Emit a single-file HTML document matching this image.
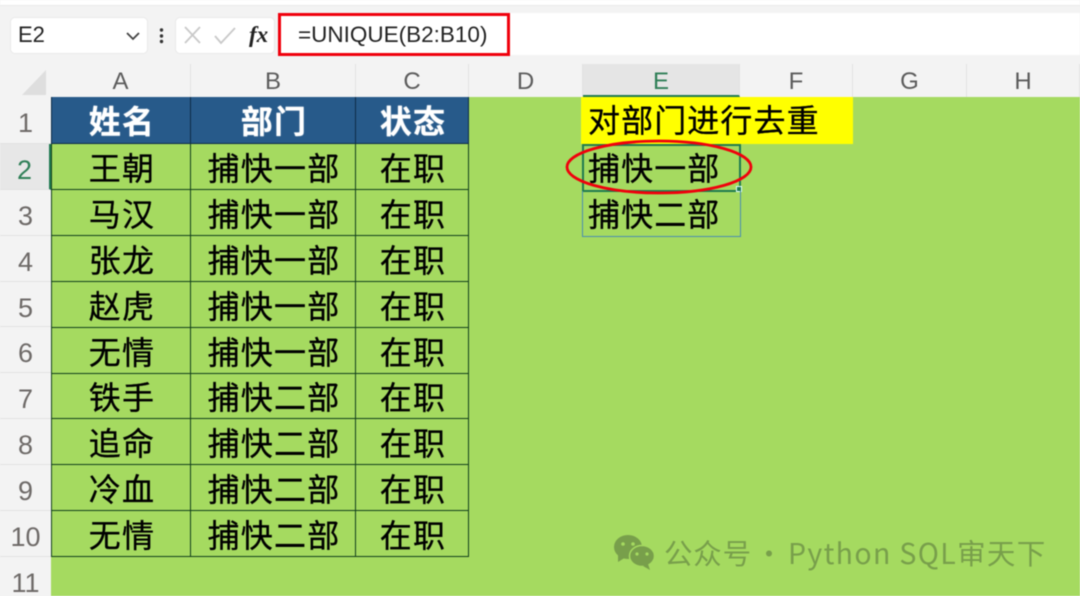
<!DOCTYPE html>
<html lang="zh"><head><meta charset="utf-8"><style>
html,body{margin:0;padding:0;background:#f3f3f3}
#w{position:absolute;left:0;top:0;width:1080px;height:596px;overflow:hidden;background:#f3f3f3;font-family:"Liberation Sans","Noto Sans CJK SC",sans-serif;filter:blur(.45px)}
body{width:1080px;height:596px;overflow:hidden;position:relative}
div{position:absolute;box-sizing:border-box}
.g{background:#a5da60;left:51px;top:97px;width:1029px;height:499px}
.h{top:64px;height:33px;text-align:center;font-size:24px;line-height:36px;color:#5c5c5c;border-right:1px solid #e2e2e2}
.r{left:0;width:51px;text-align:center;font-size:27px;line-height:32px;color:#6e6a68;border-bottom:1px solid #e2e2e2;padding-top:10px}
.c{text-align:center;font-size:32px;color:#000;-webkit-text-stroke:.3px #000;white-space:nowrap;font-family:"Noto Sans CJK SC",sans-serif;line-height:47px;height:46px;border-right:1.5px solid #123f1c;border-bottom:1.5px solid #123f1c;letter-spacing:1.2px;padding-left:2px}
.t{background:#275a8a;color:#fff;-webkit-text-stroke:0;font-weight:700;height:47px;border-color:#0d2c48;letter-spacing:1.2px;text-shadow:0 0 1px #fff}
.p{background:#fff;border-radius:5px;border:1px solid #e9e9e9}
.l{text-align:left;border:0;padding:0;letter-spacing:1.100px}
</style></head><body><div id="w">
<div class="p" style="left:-10px;top:-20px;width:1110px;height:26px;border-radius:8px"></div>

<div class="p" style="left:10px;top:17px;width:138px;height:37px"></div>
<div style="left:18px;top:20px;font-size:22px;line-height:30px;color:#222">E2</div>
<svg style="position:absolute;left:125px;top:30px" width="20" height="12"><path d="M2 3l6 6 6-6" fill="none" stroke="#444" stroke-width="1.8"/></svg>
<svg style="position:absolute;left:158px;top:27px" width="8" height="18"><circle cx="3.500" cy="3" r="1.700" fill="#333"/><circle cx="3.500" cy="9" r="1.700" fill="#333"/><circle cx="3.500" cy="14.500" r="1.700" fill="#333"/></svg>
<div class="p" style="left:175px;top:17px;width:100px;height:37px"></div>
<svg style="position:absolute;left:180px;top:23px" width="60" height="24"><path d="M5 4l15 16M20 4L5 20" stroke="#c9c9c9" stroke-width="1.800" fill="none"/><path d="M35 13l6 7 14-15" stroke="#c9c9c9" stroke-width="1.800" fill="none"/></svg>
<div style="left:249px;top:20px;font:italic 700 23px/30px 'Liberation Serif',serif;color:#222">fx</div>
<div style="left:278px;top:13px;width:802px;height:42px;background:#fff"></div>
<div style="left:278px;top:13px;width:232px;height:43px;border:3px solid #f0000c;background:#fff"></div>
<div style="left:298px;top:20px;font-size:22.500px;line-height:30px;color:#222;white-space:nowrap">=UNIQUE(B2:B10)</div>

<div class="g"></div>
<svg style="position:absolute;left:0;top:64px" width="51" height="33"><path d="M46 6v25H22z" fill="#dedede"/></svg>
<div class="h" style="left:51px;width:140px">A</div>
<div class="h" style="left:191px;width:165px">B</div>
<div class="h" style="left:356px;width:113px">C</div>
<div class="h" style="left:469px;width:114px">D</div>
<div class="h" style="left:583px;width:157px;background:#e5e5e5;color:#2f7f57;border-bottom:2px solid #1f7a50">E</div>
<div class="h" style="left:740px;width:113px">F</div>
<div class="h" style="left:853px;width:114px">G</div>
<div class="h" style="left:967px;width:113px">H</div>

<div class="r" style="top:97px;height:47px">1</div>
<div class="r" style="top:144px;height:46px;background:#e7e7e7;color:#2f7f57;border-right:2px solid #1f7a50">2</div>
<div class="r" style="top:190px;height:46px">3</div>
<div class="r" style="top:236px;height:46px">4</div>
<div class="r" style="top:282px;height:45px">5</div>
<div class="r" style="top:327px;height:46px">6</div>
<div class="r" style="top:373px;height:46px">7</div>
<div class="r" style="top:419px;height:46px">8</div>
<div class="r" style="top:465px;height:46px">9</div>
<div class="r" style="top:511px;height:46px">10</div>
<div class="r" style="top:557px;height:39px;border:0">11</div>

<div class="c t" style="left:51px;top:97px;width:140px;border-left:1px solid #0d2c48">姓名</div><div class="c t" style="left:191px;top:97px;width:165px">部门</div><div class="c t" style="left:356px;top:97px;width:113px">状态</div>

<div class="c" style="left:51px;top:144px;width:140px;border-left:1.500px solid #123f1c">王朝</div><div class="c" style="left:191px;top:144px;width:165px">捕快一部</div><div class="c" style="left:356px;top:144px;width:113px">在职</div>
<div class="c" style="left:51px;top:190px;width:140px;border-left:1.500px solid #123f1c">马汉</div><div class="c" style="left:191px;top:190px;width:165px">捕快一部</div><div class="c" style="left:356px;top:190px;width:113px">在职</div>
<div class="c" style="left:51px;top:236px;width:140px;border-left:1.500px solid #123f1c">张龙</div><div class="c" style="left:191px;top:236px;width:165px">捕快一部</div><div class="c" style="left:356px;top:236px;width:113px">在职</div>
<div class="c" style="left:51px;top:282px;width:140px;border-left:1.500px solid #123f1c">赵虎</div><div class="c" style="left:191px;top:282px;width:165px">捕快一部</div><div class="c" style="left:356px;top:282px;width:113px">在职</div>
<div class="c" style="left:51px;top:328px;width:140px;border-left:1.500px solid #123f1c">无情</div><div class="c" style="left:191px;top:328px;width:165px">捕快一部</div><div class="c" style="left:356px;top:328px;width:113px">在职</div>
<div class="c" style="left:51px;top:373px;width:140px;border-left:1.500px solid #123f1c">铁手</div><div class="c" style="left:191px;top:373px;width:165px">捕快二部</div><div class="c" style="left:356px;top:373px;width:113px">在职</div>
<div class="c" style="left:51px;top:419px;width:140px;border-left:1.500px solid #123f1c">追命</div><div class="c" style="left:191px;top:419px;width:165px">捕快二部</div><div class="c" style="left:356px;top:419px;width:113px">在职</div>
<div class="c" style="left:51px;top:465px;width:140px;border-left:1.500px solid #123f1c">冷血</div><div class="c" style="left:191px;top:465px;width:165px">捕快二部</div><div class="c" style="left:356px;top:465px;width:113px">在职</div>
<div class="c" style="left:51px;top:511px;width:140px;border-left:1.500px solid #123f1c">无情</div><div class="c" style="left:191px;top:511px;width:165px">捕快二部</div><div class="c" style="left:356px;top:511px;width:113px">在职</div>

<div style="left:581px;top:97px;width:272px;height:47px;background:#ff0"></div>
<div class="c l" style="left:588px;top:96px;width:240px">对部门进行去重</div>
<div style="left:582px;top:144px;width:159px;height:48px;border:2px solid #1f7a50"></div>
<div style="left:736px;top:186px;width:6px;height:6px;background:#1f7a50;border:1px solid #dff"></div>
<div style="left:582px;top:191px;width:159px;height:46px;border:1.500px solid #4a8db0;border-top:0"></div>
<div class="c l" style="left:588px;top:144px;width:150px">捕快一部</div>
<div class="c l" style="left:588px;top:190px;width:150px">捕快二部</div>
<svg style="position:absolute;left:560px;top:132px" width="200" height="70"><ellipse cx="99" cy="35" rx="92" ry="26" fill="none" stroke="#f0000c" stroke-width="2.800"/></svg>

<svg style="position:absolute;left:612px;top:533px" width="46" height="38" fill="#789f4b"><ellipse cx="16" cy="14" rx="14" ry="12"/><path d="M6 22l0 7 8-5z"/><ellipse cx="30" cy="23" rx="12.500" ry="10.500" stroke="#a5da60" stroke-width="1.500"/><path d="M36 31l2 6-7-4z"/><circle cx="11" cy="11" r="1.800" fill="#a5da60"/><circle cx="21" cy="11" r="1.800" fill="#a5da60"/><circle cx="25" cy="21" r="1.600" fill="#a5da60"/><circle cx="35" cy="21" r="1.600" fill="#a5da60"/></svg>
<div style="left:664px;top:533px;font-size:28.500px;line-height:40px;color:#789f4b;white-space:nowrap;font-family:'Noto Sans CJK SC',sans-serif;letter-spacing:.8px">公众号</div>
<div style="left:755px;top:533px;font-size:28px;line-height:40px;color:#789f4b;font-family:'Noto Sans CJK SC',sans-serif">·</div>
<div style="left:788px;top:533px;font-size:28.500px;line-height:40px;color:#789f4b;white-space:nowrap;font-family:'Noto Sans CJK SC',sans-serif;letter-spacing:1.350px">Python SQL审天下</div>
</div></body></html>
